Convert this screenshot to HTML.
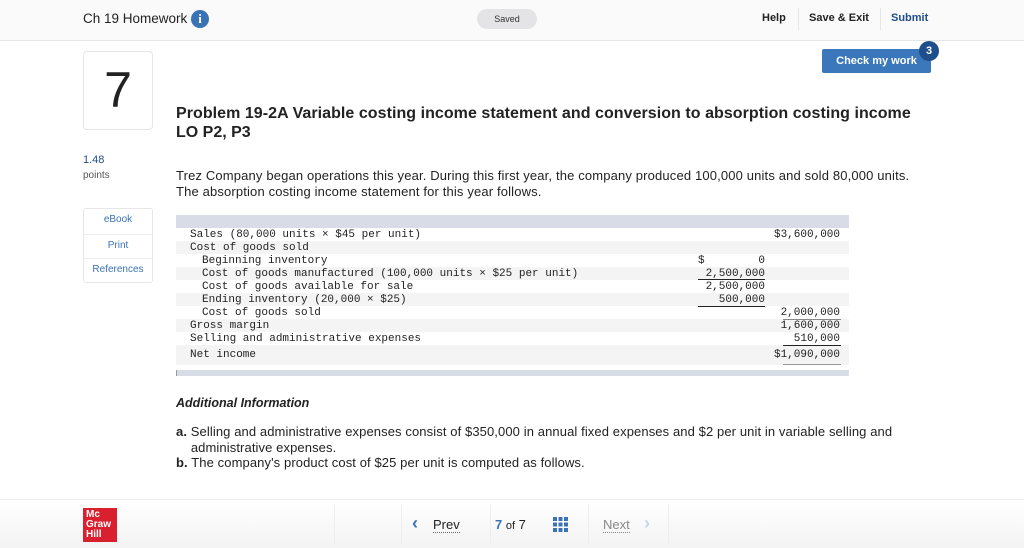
<!DOCTYPE html>
<html><head><meta charset="utf-8"><style>
*{margin:0;padding:0;box-sizing:border-box}
body{width:1024px;height:548px;background:#fff;font-family:"Liberation Sans",sans-serif;color:#222;position:relative;overflow:hidden}
.a{position:absolute;white-space:nowrap}
.hdr{position:absolute;left:0;top:0;width:1024px;height:41px;background:#fafafa;border-bottom:1px solid #e6e6e6}
.mono{font-family:"Liberation Mono",monospace;font-size:11px;color:#222;line-height:15px}
.row{position:absolute;left:176px;width:673px;height:13px}
.r{text-align:right}
.ul{position:absolute;height:1px;background:#222}
.side{position:absolute;left:83px;width:70px;height:22px;text-align:center;font-size:10px;color:#3a73b5;line-height:22px}
</style></head><body>
<div class="hdr"></div>
<div class="a" style="left:83px;top:11px;font-size:13.5px;color:#222">Ch 19 Homework</div>
<div class="a" style="left:191px;top:10px;width:18px;height:18px;border-radius:50%;background:#3a73b5;color:#fff;font-weight:bold;font-size:13px;text-align:center;line-height:18px;font-family:'Liberation Serif',serif">i</div>
<div class="a" style="left:477px;top:9px;width:60px;height:20px;border-radius:10px;background:#e4e4e6;font-size:9px;text-align:center;line-height:20px;color:#333">Saved</div>
<div class="a" style="left:762px;top:12px;font-size:11px;font-weight:bold">Help</div>
<div class="a" style="left:798px;top:8px;width:1px;height:22px;background:#e6e6e6"></div>
<div class="a" style="left:809px;top:12px;font-size:11px;font-weight:bold">Save &amp; Exit</div>
<div class="a" style="left:880px;top:8px;width:1px;height:22px;background:#e6e6e6"></div>
<div class="a" style="left:891px;top:12px;font-size:11px;font-weight:bold;color:#1f4e8c">Submit</div>
<div class="a" style="left:822px;top:49px;width:109px;height:24px;background:#3a78bb;border-radius:2px;color:#fff;font-size:11px;font-weight:bold;text-align:center;line-height:24px">Check my work</div>
<div class="a" style="left:919px;top:41px;width:20px;height:20px;border-radius:50%;background:#1f4e8c;color:#fff;font-size:11px;font-weight:bold;text-align:center;line-height:20px">3</div>

<div class="a" style="left:83px;top:51px;width:70px;height:79px;border:1px solid #e6e6e6;border-radius:4px;text-align:center;font-size:50px;line-height:76px;color:#222">7</div>
<div class="a" style="left:176px;top:105px;font-size:16px;font-weight:bold;letter-spacing:0.05px">Problem 19-2A Variable costing income statement and conversion to absorption costing income</div>
<div class="a" style="left:176px;top:124px;font-size:16px;font-weight:bold">LO P2, P3</div>
<div class="a" style="left:83px;top:154px;font-size:11px;color:#1f4e8c">1.48</div>
<div class="a" style="left:83px;top:170px;font-size:10px;color:#555">points</div>
<div class="a" style="left:176px;top:168px;font-size:13px;line-height:16px;letter-spacing:0.15px">Trez Company began operations this year. During this first year, the company produced 100,000 units and sold 80,000 units.<br>The absorption costing income statement for this year follows.</div>

<div class="a" style="left:83px;top:208px;width:70px;height:75px;border:1px solid #e6e6e6;border-radius:3px"></div>
<div class="side" style="top:209px">eBook</div>
<div class="a" style="left:84px;top:234px;width:68px;height:1px;background:#eee"></div>
<div class="side" style="top:235px">Print</div>
<div class="a" style="left:84px;top:258px;width:68px;height:1px;background:#eee"></div>
<div class="side" style="top:259px">References</div>

<div class="a" style="left:176px;top:215px;width:673px;height:13px;background:#d7dce6"></div>
<div class="row mono" style="top:228px"><span class="a" style="left:14px">Sales (80,000 units × $45 per unit)</span><span class="a r" style="right:9px">$3,600,000</span></div>
<div class="row mono" style="top:241px;background:#f4f4f4"><span class="a" style="left:14px">Cost of goods sold</span></div>
<div class="row mono" style="top:254px"><span class="a" style="left:26px">Beginning inventory</span><span class="a" style="left:522px">$</span><span class="a r" style="right:84px">0</span></div>
<div class="row mono" style="top:267px;background:#f4f4f4"><span class="a" style="left:26px">Cost of goods manufactured (100,000 units × $25 per unit)</span><span class="a r" style="right:84px">2,500,000</span></div>
<div class="row mono" style="top:280px"><span class="a" style="left:26px">Cost of goods available for sale</span><span class="a r" style="right:84px">2,500,000</span></div>
<div class="row mono" style="top:293px;background:#f4f4f4"><span class="a" style="left:26px">Ending inventory (20,000 × $25)</span><span class="a r" style="right:84px">500,000</span></div>
<div class="row mono" style="top:306px"><span class="a" style="left:26px">Cost of goods sold</span><span class="a r" style="right:9px">2,000,000</span></div>
<div class="row mono" style="top:319px;background:#f4f4f4"><span class="a" style="left:14px">Gross margin</span><span class="a r" style="right:9px">1,600,000</span></div>
<div class="row mono" style="top:332px"><span class="a" style="left:14px">Selling and administrative expenses</span><span class="a r" style="right:9px">510,000</span></div>
<div class="row mono" style="top:345px;height:20px;background:#f4f4f4"><span class="a" style="left:14px;top:3px">Net income</span><span class="a r" style="right:9px;top:3px">$1,090,000</span></div>
<div class="ul" style="left:698px;top:279px;width:67px"></div>
<div class="ul" style="left:698px;top:306px;width:67px"></div>
<div class="ul" style="left:783px;top:319px;width:58px;background:#888"></div>
<div class="ul" style="left:783px;top:345px;width:58px"></div>
<div class="ul" style="left:783px;top:364px;width:58px;background:#999"></div>
<div class="a" style="left:176px;top:370px;width:673px;height:6px;background:#d7dce6;border-left:1px solid #999"></div>

<div class="a" style="left:176px;top:396px;font-size:12.5px;font-weight:bold;font-style:italic">Additional Information</div>
<div class="a" style="left:176px;top:424px;font-size:13px;line-height:15.5px;letter-spacing:0.1px"><b>a.</b> Selling and administrative expenses consist of $350,000 in annual fixed expenses and $2 per unit in variable selling and<br>&nbsp;&nbsp;&nbsp;&nbsp;administrative expenses.<br><b>b.</b> The company's product cost of $25 per unit is computed as follows.</div>

<div class="a" style="left:0;top:499px;width:1024px;height:49px;background:linear-gradient(#fff,#f3f3f3);border-top:1px solid #eee"></div>
<div class="a" style="left:83px;top:508px;width:34px;height:34px;background:#d8202f;color:#fff;font-size:10px;font-weight:bold;line-height:10px;padding:2px 0 0 3px">Mc<br>Graw<br>Hill</div>
<div class="a" style="left:334px;top:504px;width:1px;height:40px;background:#eee"></div>
<div class="a" style="left:401px;top:504px;width:1px;height:40px;background:#eee"></div>
<div class="a" style="left:490px;top:504px;width:1px;height:40px;background:#eee"></div>
<div class="a" style="left:588px;top:504px;width:1px;height:40px;background:#eee"></div>
<div class="a" style="left:668px;top:504px;width:1px;height:40px;background:#eee"></div>
<div class="a" style="left:412px;top:513px;font-size:18px;font-weight:bold;color:#3a73b5">‹</div>
<div class="a" style="left:433px;top:517px;font-size:13px;color:#222;border-bottom:1px dotted #666">Prev</div>
<div class="a" style="left:495px;top:517px;font-size:13px"><b style="color:#3a73b5">7</b> <span style="font-size:11px">of</span> 7</div>
<div class="a" style="left:553px;top:517px;width:15px;height:15px;background:repeating-linear-gradient(90deg,#3a73b5 0 4px,#fff 4px 5.5px)"></div>
<div class="a" style="left:553px;top:517px;width:15px;height:15px;background:repeating-linear-gradient(0deg,transparent 0 4px,#fff 4px 5.5px)"></div>
<div class="a" style="left:603px;top:517px;font-size:13px;color:#888;border-bottom:1px dotted #888">Next</div>
<div class="a" style="left:644px;top:513px;font-size:18px;font-weight:bold;color:#c8d6ea">›</div>
</body></html>
